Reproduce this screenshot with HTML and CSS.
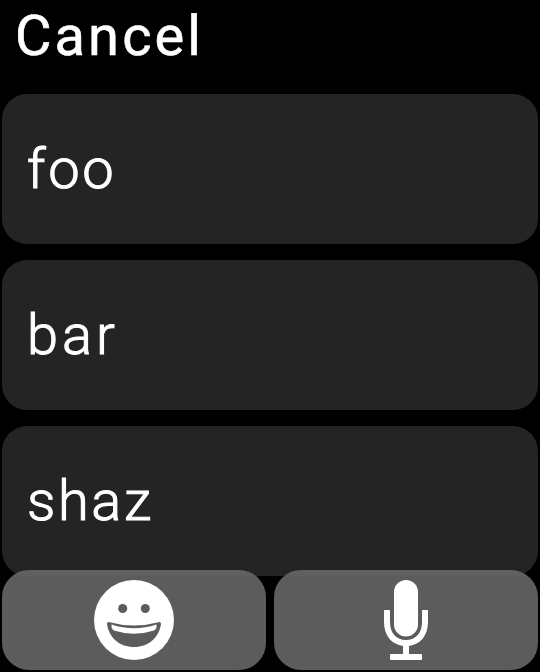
FILE: index.html
```
<!DOCTYPE html>
<html lang="en">
<head>
<meta charset="utf-8">
<title>Text input</title>
<link rel="stylesheet" href="styles.css">
</head>
<body>
<main class="screen">
  <header class="header"><span class="cancel">Cancel</span></header>
  <section class="list">
    <div class="card"><span class="word foo">foo</span></div>
    <div class="card"><span class="word bar">bar</span></div>
    <div class="card"><span class="word shaz">shaz</span></div>
  </section>
  <footer class="actions">
    <div class="action">
      <svg class="icon" viewBox="0 0 80 80">
        <circle cx="40" cy="40" r="40" fill="#fff"/>
        <circle cx="28.7" cy="28.5" r="4.5" fill="#5c5c5c"/>
        <circle cx="51.3" cy="28.5" r="4.5" fill="#5c5c5c"/>
        <path d="M14.500 42Q40 49 65.500 42Q67 42 67 44C65 58 54 67 40 67S15 58 13 44Q13 42 14.500 42Z" fill="#5c5c5c"/>
        <path d="M17.5 44.5Q40 52 62.5 44.5Q63 49 60 50.5Q40 57 20 50.5Q17 49 17.5 44.5Z" fill="#fff"/>
      </svg>
    </div>
    <div class="action">
      <svg class="icon" viewBox="0 0 80 80">
        <rect x="28" y="0" width="24" height="56.5" rx="12" fill="#fff"/>
        <path d="M18 32V30.5Q18 30 18.5 30H23.5Q24 30 24 30.5V42C24 53.5 30.5 60 40 60S56 53.5 56 42V30.5Q56 30 56.5 30H61.5Q62 30 62 30.5V42C62 56 54 64.5 43 66V74H55Q56 74 56 75V79Q56 80 55 80H25Q24 80 24 79V75Q24 74 25 74H37V66C26 64.5 18 56 18 42Z" fill="#fff"/>
      </svg>
    </div>
  </footer>
</main>
</body>
</html>
```
FILE: styles.css
```
body {
  margin: 0;
  background: #000;
  color: #fff;
  font-family: Roboto, "Liberation Sans", sans-serif;
}
.screen {
  width: 540px;
  height: 672px;
  overflow: hidden;
}
.header {
  height: 94px;
  padding-left: 15px;
  box-sizing: border-box;
}
.cancel {
  display: block;
  font-size: 56px;
  line-height: 72px;
  letter-spacing: 3.1px;
  -webkit-text-stroke: 0.6px #fff;
}
.list {
  display: flex;
  flex-direction: column;
  gap: 16px;
  padding: 0 2px;
}
.card {
  display: flex;
  align-items: center;
  height: 150px;
  padding-left: 25px;
  box-sizing: border-box;
  border-radius: 25px;
  background: #242424;
}
.word {
  font-size: 56px;
  font-weight: 300;
  line-height: 72px;
  letter-spacing: 2.6px;
  -webkit-text-stroke: 1px #fff;
}
.bar {
  letter-spacing: 4px;
}
.actions {
  position: relative;
  display: flex;
  gap: 8px;
  margin-top: -6px;
  padding: 0 2px;
}
.action {
  display: flex;
  flex: 1;
  align-items: center;
  justify-content: center;
  height: 100px;
  border-radius: 27px;
  background: linear-gradient(#606060 6px, #5c5c5c 6px);
}
.icon {
  width: 80px;
  height: 80px;
}
```
